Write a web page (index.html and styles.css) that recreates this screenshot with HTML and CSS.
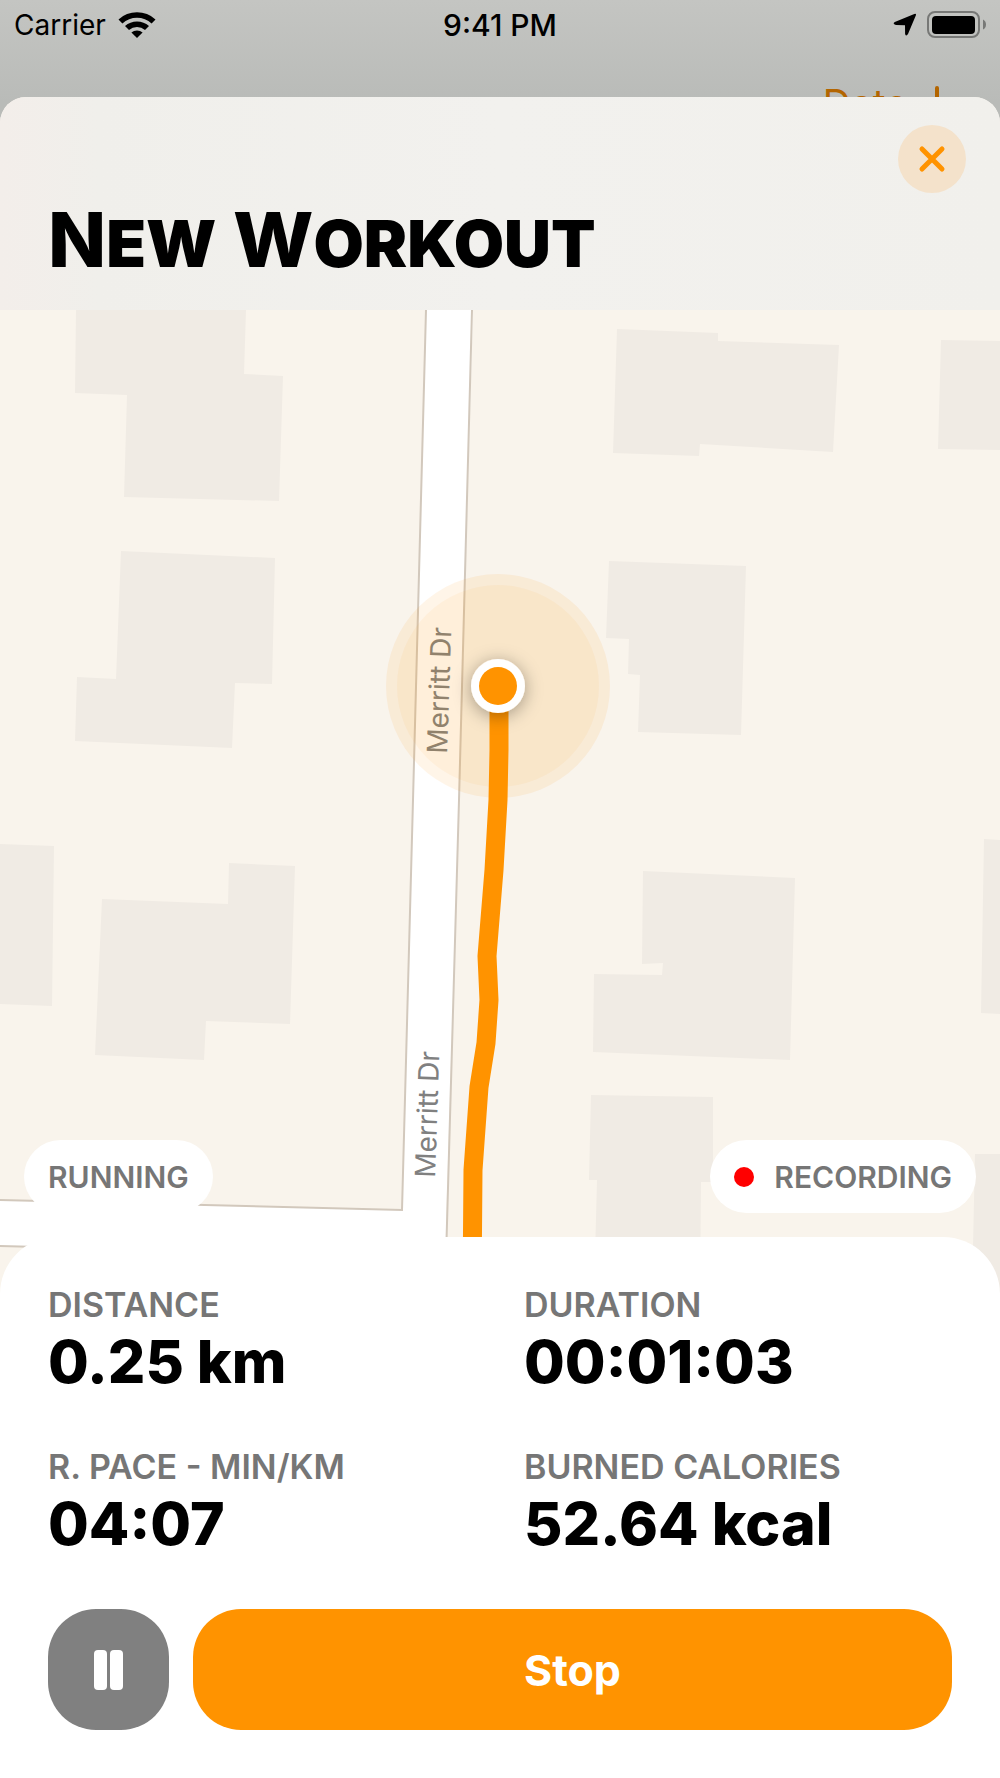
FILE: index.html
```
<!DOCTYPE html>
<html lang="en">
<head>
  <meta charset="UTF-8" />
  <meta name="viewport" content="width=device-width, initial-scale=1" />
  <title>New Workout</title>
  <link rel="stylesheet" href="styles.css">
</head>
<body>
  <div class="backdrop">
    <div class="status-bar">
      <div class="status-left">
        <span>Carrier</span>
        <svg class="wifi" width="38" height="28" viewBox="0 0 38 28" aria-hidden="true">
          <path d="M0.5 8.5 A27 27 0 0 1 37.5 8.5 L33.6 12.4 A21.5 21.5 0 0 0 4.4 12.4 Z" />
          <path d="M7 15 A18 18 0 0 1 31 15 L27 19 A12.4 12.4 0 0 0 11 19 Z" />
          <path d="M13.4 21.5 A9 9 0 0 1 24.6 21.5 L19 27 Z" />
        </svg>
      </div>
      <span class="status-time">9:41 PM</span>
      <div class="status-right">
        <svg width="24" height="24" viewBox="0 0 24 24" aria-hidden="true">
          <path d="M21.3 0.9 Q23.6 0.2 22.8 2.6 L15 21 Q13.1 24 12.1 20.9 L12 12.2 L3 12 Q-1 11 1.8 9 Z" />
        </svg>
        <svg width="59" height="28" viewBox="0 0 59 28" aria-hidden="true">
          <rect class="battery-case" x="1" y="1" width="51" height="25" rx="7" />
          <rect x="5" y="5" width="43" height="18" rx="4" />
          <path class="battery-tip" d="M56 8.5 Q59 10 59 13.5 Q59 17 56 18.5 Z" />
        </svg>
      </div>
    </div>
    <a href="#" class="sort-link">
      Date
      <svg width="26" height="36" viewBox="0 0 26 36" aria-hidden="true">
        <path d="M13 2 V33 M2 22 L13 33 L24 22" />
      </svg>
    </a>
  </div>

  <main class="sheet">
    <header class="sheet-header">
      <button class="close-btn" id="closeBtn" aria-label="Close">
        <svg width="28" height="28" viewBox="0 0 28 28" aria-hidden="true">
          <path d="M4 4 L24 24 M24 4 L4 24" />
        </svg>
      </button>
      <h1 class="title">N<span class="small">ew</span> W<span class="small">orkout</span></h1>
    </header>

    <section class="map" aria-label="Map">
      <svg class="map-canvas" viewBox="0 310 1000 984" preserveAspectRatio="xMidYMin slice">
        <defs>
          <filter id="pinShadow" x="-60%" y="-60%" width="220%" height="220%">
            <feDropShadow dx="0" dy="3" stdDeviation="9" flood-color="#000" flood-opacity="0.35" />
          </filter>
        </defs>

        <!-- buildings -->
        <g class="buildings">
          <path d="M76 310 H246 L244 374 L283 376 L279 501 L124 497 L127 395 L75 393 Z" />
          <path d="M121 551 L275 558 L272 684 L235 683 L232 748 L75 741 L77 677 L116 679 Z" />
          <path d="M0 844 L54 846 L52 1006 L0 1004 Z" />
          <path d="M102 899 L228 904 L229 863 L295 866 L290 1024 L206 1021 L204 1060 L95 1055 Z" />
          <path d="M617 329 L718 333 V341 L839 345 L833 452 L700 444 L699 456 L613 453 Z" />
          <path d="M941 340 L1000 341 V450 L938 449 Z" />
          <path d="M609 561 L746 566 L741 735 L638 732 L640 675 L628 674 L629 639 L606 638 Z" />
          <path d="M643 871 L795 878 L790 1060 L593 1052 L594 974 L662 975 L663 963 L642 964 Z" />
          <path d="M591 1095 L713 1097 V1182 L701 1182 L700 1294 H594 L597 1180 L589 1180 Z" />
          <path d="M984 839 L1000 840 V1014 L981 1013 Z" />
          <path d="M975 1154 H1000 V1294 H972 Z" />
        </g>

        <!-- roads -->
        <path class="road" d="M426 310 L413 800 L402 1210 L0 1200 V1246 L445 1256 L459 800 L473 310 Z" />
        <path class="road" d="M402 1210 H446 L445 1294 H400 Z" />
        <path class="road-edge" d="M426 310 L413 800 L402 1210 L0 1200" />
        <path class="road-edge" d="M472 310 L459 800 L445 1294 M0 1246 L400 1256" />
        <text class="street" transform="translate(447 754) rotate(-88)">Merritt Dr</text>
        <text class="street" transform="translate(435 1178) rotate(-88)">Merritt Dr</text>

        <!-- current position and track -->
        <circle class="halo" cx="498" cy="686" r="112" />
        <circle class="halo-inner" cx="498" cy="686" r="101" />
        <path class="track" d="M499 686 L499 750 L498 800 L494 870 L487 956 L489 1000 L486 1043 L479 1087 L473 1170 L472 1294" />
        <circle class="pin-ring" cx="498" cy="686" r="27" filter="url(#pinShadow)" />
        <circle class="pin" cx="498" cy="686" r="19" />
      </svg>
      <span class="pill">RUNNING</span>
      <span class="pill"><span class="rec-dot"></span>RECORDING</span>
    </section>

    <section class="panel">
      <dl class="stats">
        <div>
          <dt>DISTANCE</dt>
          <dd>0.25 km</dd>
        </div>
        <div>
          <dt>DURATION</dt>
          <dd>00:01:03</dd>
        </div>
        <div>
          <dt>R. PACE - MIN/KM</dt>
          <dd>04:07</dd>
        </div>
        <div>
          <dt>BURNED CALORIES</dt>
          <dd>52.64 kcal</dd>
        </div>
      </dl>
      <div class="actions">
        <button class="pause-btn" id="pauseBtn" aria-label="Pause">
          <svg width="29" height="40" viewBox="0 0 29 40" aria-hidden="true">
            <rect width="13" height="40" rx="4" />
            <rect x="16" width="13" height="40" rx="4" />
          </svg>
        </button>
        <button class="stop-btn" id="stopBtn">Stop</button>
      </div>
    </section>
  </main>
</body>
</html>
```
FILE: styles.css
```
* {
  box-sizing: border-box;
}

body {
  margin: 0;
  min-height: 100vh;
  display: flex;
  flex-direction: column;
  font-family: "Inter", sans-serif;
  background: #fff;
  color: #000;
}

button {
  border: none;
  padding: 0;
  font-family: inherit;
  cursor: pointer;
  display: flex;
  justify-content: center;
  align-items: center;
}

.backdrop {
  height: 128px;
  background: linear-gradient(#c4c5c2, #b9bbb8 80%);
  display: flex;
  flex-direction: column;
  gap: 32px;
  overflow: hidden;
}

.status-bar {
  display: grid;
  grid-template-columns: 1fr auto 1fr;
  align-items: center;
  height: 50px;
  flex-shrink: 0;
  padding: 0 14px;
  font-size: 28px;
}

.status-left,
.status-right {
  display: flex;
  align-items: center;
  gap: 12px;
}

.status-right {
  justify-content: flex-end;
  gap: 10px;
}

.status-time {
  font-size: 30px;
  font-weight: 500;
}

.battery-case {
  fill: none;
  stroke: #777876;
  stroke-width: 2;
}

.battery-tip {
  fill: #777876;
}

.sort-link {
  align-self: flex-end;
  display: flex;
  align-items: center;
  gap: 16px;
  margin-right: 50px;
  font-size: 39px;
  line-height: 44px;
  color: #b36500;
  text-decoration: none;
}

.sort-link path {
  fill: none;
  stroke: #b36500;
  stroke-width: 4;
  stroke-linecap: round;
}

.sheet {
  position: relative;
  flex: 1;
  display: flex;
  flex-direction: column;
  margin-top: -31px;
  border-radius: 26px 26px 0 0;
  background: #f9f4ec;
}

.sheet-header {
  display: flex;
  flex-direction: column;
  padding: 28px 34px 25px 48px;
  border-radius: 26px 26px 0 0;
  background: linear-gradient(90deg, #f3eeea, #f0efeb 10%, #f2f1ee 50%, #f1f0ec);
}

.close-btn {
  align-self: flex-end;
  width: 68px;
  height: 68px;
  border-radius: 50%;
  background: #f4e2cb;
}

.close-btn path {
  stroke: #ff9300;
  stroke-width: 5;
  stroke-linecap: round;
}

.title {
  margin: 0;
  font-size: 76px;
  line-height: 92px;
  font-weight: 800;
}

.small {
  font-size: 65px;
  line-height: 1;
  font-weight: 900;
  text-transform: uppercase;
}

.map {
  position: relative;
  flex: 1;
  min-height: 400px;
  display: flex;
  justify-content: space-between;
  align-items: flex-end;
  padding: 24px 24px 81px;
  overflow: hidden;
}

.map-canvas {
  position: absolute;
  inset: 0;
  width: 100%;
  height: 100%;
}

.buildings {
  fill: #f0ebe4;
}

.road {
  fill: #fff;
}

.road-edge {
  fill: none;
  stroke: #d2c8bc;
  stroke-width: 2;
}

.street {
  font-size: 28px;
  fill: #808080;
}

.halo {
  fill: #ff9300;
  fill-opacity: 0.09;
}

.halo-inner {
  fill: #ff9f00;
  fill-opacity: 0.06;
}

.track {
  fill: none;
  stroke: #ff9300;
  stroke-width: 19;
  stroke-linejoin: round;
}

.pin-ring {
  fill: #fff;
}

.pin {
  fill: #ff9300;
}

.pill {
  position: relative;
  display: flex;
  align-items: center;
  gap: 20px;
  height: 73px;
  padding: 0 24px;
  border-radius: 37px;
  background: #fff;
  color: #767676;
  font-size: 30px;
  font-weight: 600;
}

.rec-dot {
  width: 20px;
  height: 20px;
  border-radius: 50%;
  background: #f00;
}

.panel {
  position: relative;
  margin-top: -57px;
  padding: 48px;
  border-radius: 57px 57px 0 0;
  background: #fff;
}

.stats {
  display: grid;
  grid-template-columns: 1fr 1fr;
  gap: 48px;
  margin: 0 0 48px;
}

dt {
  color: #767676;
  font-size: 34px;
  line-height: 40px;
  font-weight: 600;
}

dd {
  margin: 0;
  font-size: 59px;
  line-height: 74px;
  font-weight: 800;
}

.actions {
  display: flex;
  gap: 24px;
}

.pause-btn,
.stop-btn {
  height: 121px;
  border-radius: 48px;
  color: #fff;
}

.pause-btn {
  width: 121px;
  background: #808080;
}

.pause-btn svg {
  fill: #fff;
}

.stop-btn {
  flex: 1;
  background: #ff9300;
  font-size: 43px;
  font-weight: 700;
}
```
